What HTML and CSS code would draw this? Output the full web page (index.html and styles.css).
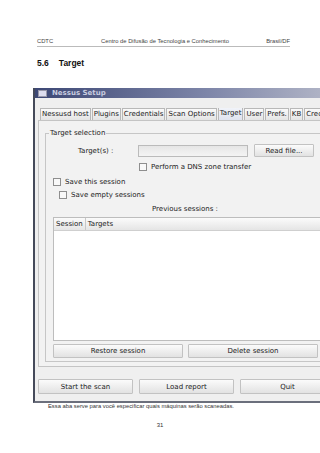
FILE: index.html
```html
<!DOCTYPE html>
<html lang="pt">
<head>
    <meta charset="UTF-8">
    <title>Nessus Setup - Target</title>
    <link rel="stylesheet" href="styles.css">
</head>
<body>

    <div class="page">
        <div class="running-head">
            <span>CDTC</span>
            <span class="center">Centro de Difusão de Tecnologia e Conhecimento</span>
            <span>Brasil/DF</span>
        </div>

        <h2 class="section"><span class="num">5.6</span>Target</h2>
    </div>

    <div class="window">
        <div class="titlebar">
            <span class="app-icon"></span>
            <span class="title">Nessus Setup</span>
            <span class="win-btn"></span>
        </div>

        <div class="body">
            <div class="tabs">
                <span class="tab">Nessusd host</span>
                <span class="tab">Plugins</span>
                <span class="tab">Credentials</span>
                <span class="tab">Scan Options</span>
                <span class="tab active">Target</span>
                <span class="tab">User</span>
                <span class="tab">Prefs.</span>
                <span class="tab">KB</span>
                <span class="tab">Cred</span>
            </div>

            <div class="pane">
                <fieldset class="group">
                    <legend>Target selection</legend>

                    <div class="row targets">
                        <label class="lbl">Target(s) :</label>
                        <span class="field"></span>
                        <button class="btn read">Read file...</button>
                    </div>

                    <div class="row dns">
                        <span class="check"></span>Perform a DNS zone transfer
                    </div>

                    <div class="row save">
                        <span class="check"></span>Save this session
                    </div>
                    <div class="row save-empty">
                        <span class="check"></span>Save empty sessions
                    </div>

                    <div class="prev">Previous sessions :</div>

                    <div class="list">
                        <div class="list-head">
                            <span class="col c1">Session</span>
                            <span class="col c2">Targets</span>
                        </div>
                    </div>

                    <div class="row session-btns">
                        <button class="btn wide">Restore session</button>
                        <button class="btn wide">Delete session</button>
                    </div>
                </fieldset>
            </div>

            <div class="row bottom-btns">
                <button class="btn big">Start the scan</button>
                <button class="btn big">Load report</button>
                <button class="btn big">Quit</button>
            </div>
        </div>
    </div>

    <p class="caption">Essa aba serve para você especificar quais máquinas serão scaneadas.</p>
    <p class="page-num">31</p>

</body>
</html>
```

FILE: styles.css
```css
html, body {
    margin: 0;
    padding: 0;
    background: #fff;
    overflow: hidden;
}
body {
    font-family: "Liberation Sans", Arial, sans-serif;
    color: #222;
    width: 320px;
    height: 453px;
}
.page {
    padding: 38px 30px 0 37px;
}
.running-head {
    display: flex;
    font-size: 5.8px;
    line-height: 7px;
    color: #444;
    padding-bottom: 1px;
    border-bottom: 1px solid #bbb;
}
.running-head .center {
    margin-left: 48px;
}
.running-head span:last-child {
    margin-left: auto;
}
.section {
    font-size: 8.5px;
    line-height: 10px;
    margin: 11px 0 0;
    color: #111;
}
.section .num {
    margin-right: 10px;
}

/* window */
.window {
    margin: 20px 0 0 33px;
    width: 310px;
    border-left: 2px solid #454a5a;
    border-bottom: 2px solid #6b6f7c;
    background: #efefef;
    font-family: "DejaVu Sans", Verdana, sans-serif;
    font-size: 7px;
    color: #222;
}
.titlebar {
    height: 10px;
    display: flex;
    align-items: center;
    background: linear-gradient(to right, #3d4875, #7d85a8 55%, #b9bccb);
    padding-left: 3px;
}
.app-icon {
    width: 7px;
    height: 5px;
    background: #dde;
    border: 1px solid #99a;
    margin-right: 5px;
}
.title {
    color: #c9cde0;
    font-weight: bold;
    font-size: 7px;
}
.win-btn {
    margin-left: auto;
    margin-right: 7px;
    width: 6px;
    height: 6px;
    border: 1px solid #777;
    background: #ccc;
}
.body {
    padding: 10px 0 7px 3px;
}
.tabs {
    display: flex;
    gap: 1px;
    height: 12px;
    padding-left: 2px;
    overflow: hidden;
}
.tab {
    border: 1px solid #b8b8b8;
    border-bottom: none;
    background: linear-gradient(#fafafa, #e4e4e4);
    padding: 0 1px;
    line-height: 11px;
    white-space: nowrap;
}
.tab.active {
    background: linear-gradient(#f2f4fa, #dfe3ef);
    margin-top: -2px;
    line-height: 13px;
}
.pane {
    border: 1px solid #c4c4c4;
    background: #f2f2f2;
    padding: 8px 0 4px 6px;
}
.group {
    margin: 0;
    border: 1px solid #c6c6c6;
    padding: 0 0 3px 7px;
}
.group legend {
    padding: 0 1px;
    margin-left: -4px;
    line-height: 8px;
}
.row {
    display: flex;
    align-items: center;
}
.targets {
    margin-top: 7px;
    height: 13px;
}
.lbl {
    width: 85px;
    padding-left: 25px;
    box-sizing: border-box;
}
.field {
    width: 108px;
    height: 10px;
    border: 1px solid #bbb;
    background: linear-gradient(#e6e6e6, #f4f4f4);
}
.btn {
    font: inherit;
    color: #222;
    border: 1px solid #c2c2c2;
    border-radius: 1px;
    background: linear-gradient(#fbfbfb, #e2e2e2);
    padding: 0;
    height: 13px;
}
.read {
    width: 60px;
    margin-left: 6px;
}
.dns {
    margin-top: 5px;
    padding-left: 86px;
    height: 10px;
}
.check {
    width: 6px;
    height: 6px;
    border: 1px solid #8e8e8e;
    background: #f8f8f8;
    margin-right: 4px;
}
.save {
    margin-top: 5px;
    height: 10px;
}
.save-empty {
    margin-top: 3px;
    height: 10px;
    padding-left: 6px;
}
.prev {
    margin-top: 4px;
    padding-left: 99px;
    height: 10px;
    line-height: 10px;
}
.list {
    margin-top: 3px;
    height: 122px;
    border: 1px solid #bdbdbd;
    background: #fff;
}
.list-head {
    display: flex;
    height: 12px;
    background: linear-gradient(#fbfbfb, #e5e5e5);
    border-bottom: 1px solid #cfcfcf;
}
.col {
    line-height: 12px;
    padding: 0 2px;
}
.c1 {
    border-right: 1px solid #c8c8c8;
}
.c2 {
    flex: 1;
}
.session-btns {
    margin-top: 3px;
    gap: 5px;
}
.wide {
    width: 130px;
    height: 14px;
}
.bottom-btns {
    margin-top: 12px;
    gap: 6px;
}
.big {
    width: 95px;
    height: 15px;
}
.caption {
    font-size: 5.8px;
    line-height: 7px;
    margin: 0 0 0 48px;
    color: #333;
}
.page-num {
    font-size: 6px;
    line-height: 7px;
    text-align: center;
    margin: 12px 0 0;
    color: #333;
}
```
